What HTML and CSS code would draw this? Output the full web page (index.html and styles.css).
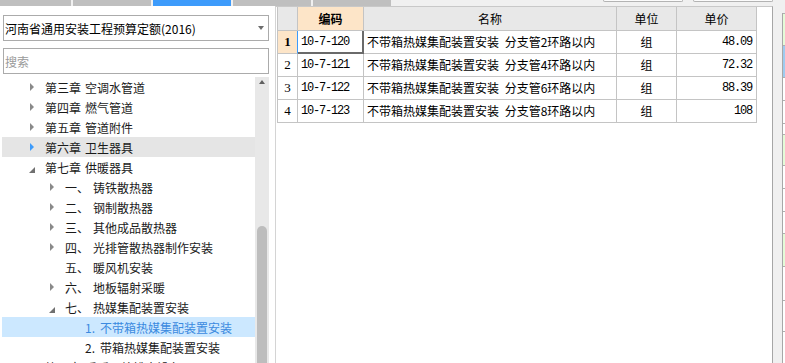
FILE: index.html
```html
<!DOCTYPE html>
<html lang="zh-CN">
<head>
    <meta charset="UTF-8">
    <meta name="viewport" content="width=device-width, initial-scale=1.0">
    <title>定额库</title>
    <link rel="stylesheet" href="styles.css">
</head>
<body>
    <div class="tabstrip">
        <span class="tab tab-first"></span>
        <span class="tab"></span>
        <span class="tab active"></span>
        <span class="tab"></span>
        <span class="tab"></span>
        <span class="tool-btn push"></span>
        <span class="tool-btn"></span>
    </div>

    <div class="workspace">
        <aside class="sidebar">
            <div class="combo">
                <span>河南省通用安装工程预算定额(2016)</span>
                <i class="combo-arrow"></i>
            </div>
            <input class="search" type="text" placeholder="搜索">

            <div class="tree-box">
                <ul class="tree">
                    <li class="node lv1"><i class="toggle closed"></i><span class="no">第三章</span>空调水管道</li>
                    <li class="node lv1"><i class="toggle closed"></i><span class="no">第四章</span>燃气管道</li>
                    <li class="node lv1"><i class="toggle closed"></i><span class="no">第五章</span>管道附件</li>
                    <li class="node lv1 hover"><i class="toggle closed"></i><span class="no">第六章</span>卫生器具</li>
                    <li class="node lv1"><i class="toggle open"></i><span class="no">第七章</span>供暖器具</li>
                    <li class="node lv2"><i class="toggle closed"></i><span class="no">一、</span>铸铁散热器</li>
                    <li class="node lv2"><i class="toggle closed"></i><span class="no">二、</span>钢制散热器</li>
                    <li class="node lv2"><i class="toggle closed"></i><span class="no">三、</span>其他成品散热器</li>
                    <li class="node lv2"><i class="toggle closed"></i><span class="no">四、</span>光排管散热器制作安装</li>
                    <li class="node lv2"><i class="toggle"></i><span class="no">五、</span>暖风机安装</li>
                    <li class="node lv2"><i class="toggle closed"></i><span class="no">六、</span>地板辐射采暖</li>
                    <li class="node lv2"><i class="toggle open"></i><span class="no">七、</span>热媒集配装置安装</li>
                    <li class="node lv3 selected"><i class="toggle"></i><span class="no">1.</span>不带箱热媒集配装置安装</li>
                    <li class="node lv3"><i class="toggle"></i><span class="no">2.</span>带箱热媒集配装置安装</li>
                    <li class="node lv1"><i class="toggle closed"></i><span class="no">第八章</span>采暖、给排水设备</li>
                </ul>
                <div class="scrollbar">
                    <i class="scroll-up"></i>
                    <span class="thumb"></span>
                </div>
            </div>
        </aside>

        <main class="grid-panel">
            <table class="quota-table">
                <tr>
                    <th class="col-no"></th>
                    <th class="col-code sorted">编码</th>
                    <th class="col-name">名称</th>
                    <th class="col-unit">单位</th>
                    <th class="col-price">单价</th>
                </tr>
                <tr>
                    <td class="num current">1</td>
                    <td class="code focus">10-7-120</td>
                    <td class="name">不带箱热媒集配装置安装 分支管2环路以内</td>
                    <td class="unit">组</td>
                    <td class="price">48.09</td>
                </tr>
                <tr>
                    <td class="num">2</td>
                    <td class="code">10-7-121</td>
                    <td class="name">不带箱热媒集配装置安装 分支管4环路以内</td>
                    <td class="unit">组</td>
                    <td class="price">72.32</td>
                </tr>
                <tr>
                    <td class="num">3</td>
                    <td class="code">10-7-122</td>
                    <td class="name">不带箱热媒集配装置安装 分支管6环路以内</td>
                    <td class="unit">组</td>
                    <td class="price">88.39</td>
                </tr>
                <tr>
                    <td class="num">4</td>
                    <td class="code">10-7-123</td>
                    <td class="name">不带箱热媒集配装置安装 分支管8环路以内</td>
                    <td class="unit">组</td>
                    <td class="price">108</td>
                </tr>
            </table>
        </main>

        <div class="side-strip">
            <div class="strip-col">
                <span class="cell green h32"></span>
                <span class="cell blue h33"></span>
                <span class="cell h23"></span>
                <span class="cell h23"></span>
                <span class="cell h11"></span>
                <span class="cell green h32"></span>
                <span class="cell h23"></span>
                <span class="cell h23"></span>
                <span class="cell h23"></span>
                <span class="cell green h33"></span>
                <span class="cell h34"></span>
                <span class="cell h32"></span>
                <span class="cell h32"></span>
            </div>
        </div>
    </div>
</body>
</html>
```

FILE: styles.css
```css
*{
    margin: 0;
    padding: 0;
    box-sizing: border-box;
}
body{
    font-family: "Noto Sans CJK SC", "Microsoft YaHei", sans-serif;
    font-size: 12px;
    color: #1a1a1a;
    background: #fff;
    overflow: hidden;
}

/* top tab strip (cut off) */
.tabstrip{
    display: flex;
    gap: 2px;
    height: 6px;
    padding-right: 12px;
    background: #f0f0f0;
}
.tab{
    width: 78px;
    background: #bfbfbf;
}
.tab-first{
    width: 71px;
}
.tab.active{
    background: #3d9bfb;
}
.tool-btn{
    width: 80px;
    height: 2px;
    margin-left: 8px;
    background: #fbfbfb;
    border: 1px solid #b3b3b3;
    border-top: none;
    border-radius: 0 0 3px 3px;
}
.tool-btn.push{
    margin-left: auto;
}

.workspace{
    display: flex;
    height: 357px;
}

/* left: quota library tree */
.sidebar{
    width: 275px;
    display: flex;
    flex-direction: column;
}
.combo{
    margin: 9px 0 0 3px;
    width: 266px;
    height: 26px;
    border: 1px solid #ababab;
    padding: 0 4px 0 1px;
    display: flex;
    align-items: center;
    justify-content: space-between;
    color: #000;
}
.combo-arrow{
    border-left: 3.5px solid transparent;
    border-right: 3.5px solid transparent;
    border-top: 4px solid #6d6d6d;
}
.search{
    margin: 7px 0 0 3px;
    width: 266px;
    height: 26px;
    border: 1px solid #ababab;
    padding: 0 1px;
    font-family: inherit;
    font-size: 12px;
    outline: none;
}
.search::placeholder{
    color: #9a9a9a;
}

.tree-box{
    margin-top: 3px;
    flex: 1;
    display: flex;
    padding-left: 2px;
    overflow: hidden;
}
.tree{
    list-style: none;
    width: 253px;
    overflow: hidden;
}
.node{
    height: 20px;
    display: flex;
    align-items: center;
    white-space: nowrap;
}
.lv1{ padding-left: 27px; }
.lv2{ padding-left: 47px; }
.lv3{ padding-left: 67px; }
.node .no{
    margin-right: 4px;
}
.lv3 .no{
    margin-right: 5px;
}
.toggle{
    flex: none;
    width: 16px;
    height: 20px;
    display: flex;
    align-items: center;
}
.toggle.closed::before{
    content: '';
    margin-left: 1px;
    border-left: 4px solid #8a8a8a;
    border-top: 4px solid transparent;
    border-bottom: 4px solid transparent;
}
.toggle.open::before{
    content: '';
    margin-top: 5px;
    border-left: 6px solid transparent;
    border-bottom: 6px solid #707070;
}
.node.hover{
    background: #e5e5e5;
}
.node.hover .toggle::before{
    border-left-color: #3d9bfb;
}
.node.selected{
    background: #cce8ff;
    color: #3b8ae0;
}

.scrollbar{
    width: 14px;
    background: #e8e8e8;
    display: flex;
    flex-direction: column;
    align-items: center;
}
.scroll-up{
    margin-top: 3px;
    border-left: 3.5px solid transparent;
    border-right: 3.5px solid transparent;
    border-bottom: 4px solid #606060;
}
.thumb{
    margin-top: auto;
    width: 10px;
    height: 137px;
    background: #bdbdbd;
    border-radius: 5px 5px 0 0;
}

/* right: quota items grid */
.grid-panel{
    width: 498px;
    border-top: 1px solid #c8c8c8;
    border-left: 1px solid #d4d4d4;
    border-right: 1px solid #a6a6a6;
    padding-left: 1px;
}
.quota-table{
    border-collapse: separate;
    border-spacing: 0;
    table-layout: fixed;
    width: 480px;
    color: #000;
}
.quota-table th,
.quota-table td{
    border-right: 1px solid #c4c4c4;
    border-bottom: 1px solid #c4c4c4;
    white-space: nowrap;
    overflow: hidden;
}
.quota-table th{
    height: 24px;
    line-height: 23px;
    background: #e8e8e8;
    font-weight: normal;
    text-align: center;
}
.quota-table td{
    height: 23px;
    line-height: 22px;
    padding: 0 3px;
}
.quota-table .col-no,
.quota-table .num{
    border-left: 1px solid #c4c4c4;
}
.col-no{ width: 21px; }
.col-code{ width: 66px; }
.col-name{ width: 253px; }
.col-unit{ width: 60px; }
.col-price{ width: 80px; }

.quota-table th.sorted{
    background: #fde5c8;
    font-weight: bold;
}
.quota-table td.num{
    padding: 0;
    text-align: center;
    font-family: "Liberation Serif", serif;
    font-size: 13px;
}
.quota-table td.current{
    background: #fde5c8;
    font-weight: bold;
    border-right-color: #3d9bfb;
}
.quota-table td.code,
.quota-table td.price{
    font-family: "Liberation Mono", monospace;
    font-size: 12px;
    letter-spacing: -1.2px;
}
.quota-table td.focus{
    border-right-color: #6a6a6a;
    border-bottom-color: #6a6a6a;
    box-shadow: inset -1px -1px 0 #6a6a6a;
}
.quota-table td.name{
    word-spacing: 3px;
}
.quota-table td.unit{
    text-align: center;
}
.quota-table td.price{
    text-align: right;
    padding-right: 4px;
}

/* right edge: neighbouring panel */
.side-strip{
    width: 12px;
    background: #f0f0f0;
    display: flex;
    justify-content: flex-end;
}
.strip-col{
    width: 3px;
    margin-top: 7px;
    border-left: 1px solid #a8a8a8;
    display: flex;
    flex-direction: column;
    background: #fff;
}
.cell{
    border-top: 1px solid #b0b0b0;
}
.cell.green{ background: #e4fbd8; }
.cell.blue{ background: #9ecbef; }
.h11{ height: 11px; }
.h23{ height: 23px; }
.h32{ height: 32px; }
.h33{ height: 33px; }
.h34{ height: 34px; }
```
